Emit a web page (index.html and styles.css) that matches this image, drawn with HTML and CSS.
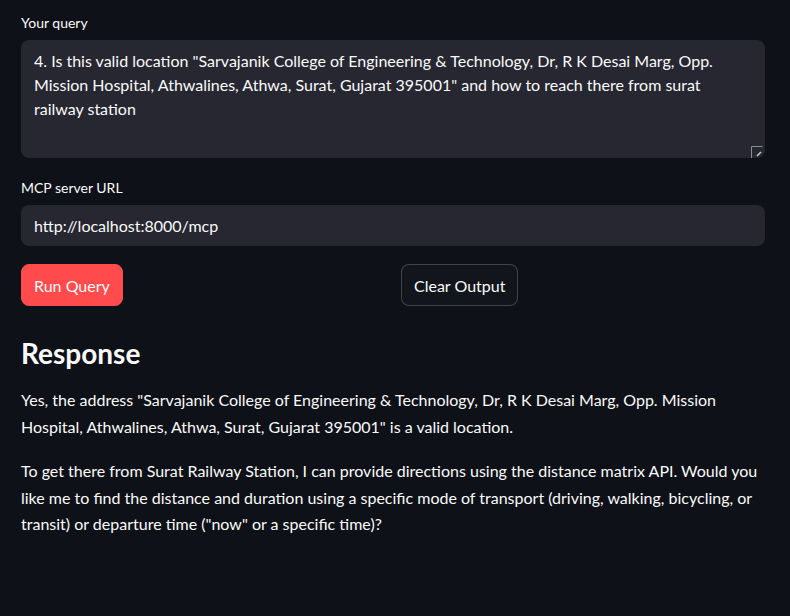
FILE: index.html
```html
<!DOCTYPE html>
<html>
<head>
<meta charset="utf-8">
<link rel="stylesheet" href="styles.css">
</head>
<body>
<main class="app">
  <div class="field field-query">
    <label class="label">Your query</label>
    <div class="textarea">
      <div class="textarea-text">4. Is this valid location "Sarvajanik College of Engineering &amp; Technology, Dr, R K Desai Marg, Opp. Mission Hospital, Athwalines, Athwa, Surat, Gujarat 395001" and how to reach there from surat railway station</div>
      <svg class="resize" width="12" height="12" viewBox="0 0 12 12"><path d="M0.5 12V0.5H11.5" fill="none" stroke="#8a8c94" stroke-width="1"/><path d="M6 10L10 6" stroke="#c8c8cc" stroke-width="1.6"/></svg>
    </div>
  </div>
  <div class="field">
    <label class="label">MCP server URL</label>
    <div class="input">http://localhost:8000/mcp</div>
  </div>
  <div class="buttons">
    <div class="col"><button class="btn primary">Run Query</button></div>
    <div class="col"><button class="btn secondary">Clear Output</button></div>
  </div>
  <h3 class="heading">Response</h3>
  <p class="para">Yes, the address "Sarvajanik College of Engineering &amp; Technology, Dr, R K Desai Marg, Opp. Mission Hospital, Athwalines, Athwa, Surat, Gujarat 395001" is a valid location.</p>
  <p class="para">To get there from Surat Railway Station, I can provide directions using the distance matrix API. Would you like me to find the distance and duration using a specific mode of transport (driving, walking, bicycling, or transit) or departure time ("now" or a specific time)?</p>
</main>
</body>
</html>
```

FILE: styles.css
```css
html, body {
  margin: 0;
  padding: 0;
  background: #0e1117;
  color: #fafafa;
  font-family: "Lato", "Open Sans", sans-serif;
}
.app {
  width: 744px;
  padding: 14px 25px 0 21px;
}
.field {
  display: flex;
  flex-direction: column;
  margin-bottom: 18px;
}
.field-query {
  margin-bottom: 21px;
}
.label {
  font-size: 14px;
  line-height: 18px;
  margin-bottom: 8px;
}
.textarea {
  position: relative;
  background: #262730;
  border-radius: 8px;
  height: 118px;
  box-sizing: border-box;
  padding: 9px 13px 8px;
}
.textarea-text {
  font-size: 16px;
  line-height: 24px;
}
.resize {
  position: absolute;
  right: 2px;
  bottom: 0;
}
.input {
  background: #262730;
  border-radius: 8px;
  height: 41px;
  box-sizing: border-box;
  padding: 0 13px;
  display: flex;
  align-items: center;
  font-size: 16px;
}
.buttons {
  display: flex;
  gap: 16px;
}
.col {
  flex: 1;
}
.btn {
  font-family: inherit;
  font-size: 16px;
  height: 42px;
  padding: 0 12px;
  border-radius: 8px;
  color: #fafafa;
  cursor: pointer;
}
.primary {
  background: #ff4b4b;
  border: 1px solid #ff4b4b;
}
.secondary {
  background: #12151c;
  border: 1px solid rgba(250, 250, 250, 0.2);
}
.heading {
  font-size: 28px;
  font-weight: 700;
  margin: 27px 0 0;
  line-height: 40px;
}
.para {
  font-size: 16px;
  line-height: 26.5px;
  margin: 14px 0 18px;
}
.para + .para {
  margin-top: 0;
}
```
